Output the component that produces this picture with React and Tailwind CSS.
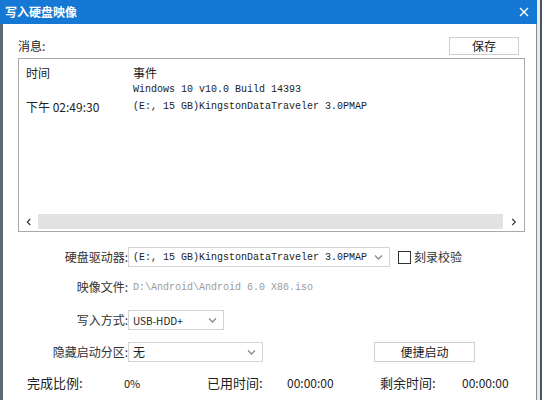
import React from "react";

const CJK = "font-['Noto_Sans_CJK_SC','Noto_Sans',sans-serif]";
const MONO = "font-['Liberation_Mono','Noto_Sans_CJK_SC',monospace]";

function Chevron({ dir = "down", className = "" }) {
  const d = {
    down: "M1 1.5 L4.5 5 L8 1.5",
    left: "M5 1 L1.5 4.5 L5 8",
    right: "M1.5 1 L5 4.5 L1.5 8",
  }[dir];
  const box = dir === "down" ? "0 0 9 6" : "0 0 7 9";
  return (
    <svg viewBox={box} className={className} fill="none" stroke="currentColor" strokeWidth="1.3">
      <path d={d} />
    </svg>
  );
}

function Select({ width, children, mono }) {
  return (
    <div className={`${width} h-[20px] border border-[#d4d4d4] bg-white flex items-center pl-[4px] pr-[6px]`}>
      <div className={`flex-1 truncate ${mono ? `${MONO} text-[10px] text-[#222]` : `${CJK} text-[12px] text-[#222]`}`}>{children}</div>
      <Chevron className="w-[9px] h-[6px] text-[#8a8a8a]" />
    </div>
  );
}

function Label({ children }) {
  return <div className={`w-[110px] text-right text-[12px] text-[#333] ${CJK}`}>{children}</div>;
}

export default function App() {
  return (
    <div className={`w-[542px] h-[400px] flex bg-white overflow-hidden ${CJK}`}>
      {/* window */}
      <div className="w-[537px] flex flex-col">
        {/* title bar */}
        <div className="h-[24px] bg-[#1478d4] flex items-center justify-between pl-[5px] pr-[8px]">
          <span className="text-white text-[12px] font-bold leading-none">写入硬盘映像</span>
          <svg viewBox="0 0 10 10" className="w-[10px] h-[10px] text-white" stroke="currentColor" strokeWidth="1.4">
            <path d="M1 1 L9 9 M9 1 L1 9" />
          </svg>
        </div>

        <div className="flex-1 flex">
          <div className="w-[3px] bg-[#5d6872]" />
          <div className="flex-1 flex flex-col pl-[15px] pr-[11px] border-r border-[#8a8a8a]">
            {/* top row */}
            <div className="mt-[13px] h-[18px] flex items-center justify-between pr-[6px]">
              <span className="text-[12px] text-[#222]">消息:</span>
              <button className="w-[70px] h-[18px] border border-[#cfcfcf] bg-white text-[12px] text-[#222] leading-none">保存</button>
            </div>

            {/* list box */}
            <div className="mt-[3px] h-[174px] border border-[#a9a9a9] flex flex-col">
              <div className="flex-1 pt-[5px] pl-[7px]">
                <div className="h-[17px] flex items-center text-[12px] text-[#222]">
                  <span className="w-[107px]">时间</span>
                  <span>事件</span>
                </div>
                <div className="h-[17px] flex items-center">
                  <span className="w-[107px]" />
                  <span className={`${MONO} text-[10px] text-[#222]`}>Windows 10 v10.0 Build 14393</span>
                </div>
                <div className="h-[17px] flex items-center">
                  <span className="w-[107px] text-[12px] text-[#222]">下午 02:49:30</span>
                  <span className={`${MONO} text-[10px] text-[#222]`}>(E:, 15 GB)KingstonDataTraveler 3.0PMAP</span>
                </div>
              </div>
              {/* horizontal scrollbar */}
              <div className="h-[17px] mb-[1px] flex items-center">
                <div className="w-[19px] flex justify-center">
                  <Chevron dir="left" className="w-[6px] h-[8px] text-[#333]" />
                </div>
                <div className="flex-1 h-[15px] bg-[#e2e2e2]" />
                <div className="w-[21px] flex justify-center">
                  <Chevron dir="right" className="w-[6px] h-[8px] text-[#333]" />
                </div>
              </div>
            </div>

            {/* drive */}
            <div className="mt-[15px] h-[20px] flex items-center">
              <Label>硬盘驱动器:</Label>
              <Select width="w-[262px]" mono>(E:, 15 GB)KingstonDataTraveler 3.0PMAP</Select>
              <div className="ml-[8px] w-[13px] h-[13px] border border-[#333] bg-white" />
              <span className="ml-[3px] text-[12px] text-[#333]">刻录校验</span>
            </div>

            {/* image file */}
            <div className="mt-[10px] h-[20px] flex items-center">
              <Label>映像文件:</Label>
              <span className={`pl-[5px] ${MONO} text-[10px] text-[#9a9a9a]`}>D:\Android\Android 6.0 X86.iso</span>
            </div>

            {/* write mode */}
            <div className="mt-[13px] h-[20px] flex items-center">
              <Label>写入方式:</Label>
              <Select width="w-[96px]">
                <span className="text-[10px]">USB-HDD+</span>
              </Select>
            </div>

            {/* hidden partition */}
            <div className="mt-[12px] h-[20px] flex items-center">
              <Label>隐藏启动分区:</Label>
              <Select width="w-[135px]">无</Select>
              <button className="ml-[111px] w-[101px] h-[20px] border border-[#cfcfcf] bg-white text-[12px] text-[#222] leading-none">便捷启动</button>
            </div>

            {/* progress */}
            <div className="mt-[11px] h-[20px] flex items-center pl-[9px] text-[#222]">
              <span className="w-[97px] text-[13px]">完成比例:</span>
              <span className="w-[83px] text-[11px]">0%</span>
              <span className="w-[80px] text-[13px]">已用时间:</span>
              <span className="w-[93px] text-[12px]">00:00:00</span>
              <span className="w-[82px] text-[13px]">剩余时间:</span>
              <span className="text-[12px]">00:00:00</span>
            </div>
          </div>
        </div>
      </div>
      {/* outside the window */}
      <div className="flex-1 flex">
        <div className="flex-1 bg-[#e9ecef]" />
        <div className="w-[2px] bg-[#4d5660]" />
      </div>
    </div>
  );
}
